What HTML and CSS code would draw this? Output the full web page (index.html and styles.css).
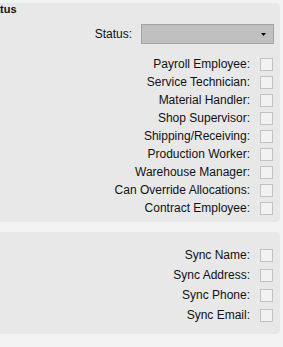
FILE: index.html
```html
<!DOCTYPE html>
<html>
<head>
<meta charset="utf-8">
<link rel="stylesheet" href="styles.css">
</head>
<body>
<div class="page">
  <section class="panel panel-status">
    <div class="panel-title">Status</div>
    <div class="field-row select-row">
      <label class="label">Status:</label>
      <div class="select"><svg class="arrow" width="5" height="3" viewBox="0 0 5 3"><polygon points="0,0 5,0 2.5,3" fill="#000"/></svg></div>
    </div>
    <div class="check-list">
      <div class="check-row"><span class="label">Payroll Employee:</span><input type="checkbox" class="box"></div>
      <div class="check-row"><span class="label">Service Technician:</span><input type="checkbox" class="box"></div>
      <div class="check-row"><span class="label">Material Handler:</span><input type="checkbox" class="box"></div>
      <div class="check-row"><span class="label">Shop Supervisor:</span><input type="checkbox" class="box"></div>
      <div class="check-row"><span class="label">Shipping/Receiving:</span><input type="checkbox" class="box"></div>
      <div class="check-row"><span class="label">Production Worker:</span><input type="checkbox" class="box"></div>
      <div class="check-row"><span class="label">Warehouse Manager:</span><input type="checkbox" class="box"></div>
      <div class="check-row"><span class="label">Can Override Allocations:</span><input type="checkbox" class="box"></div>
      <div class="check-row"><span class="label">Contract Employee:</span><input type="checkbox" class="box"></div>
    </div>
  </section>
  <section class="panel panel-sync">
    <div class="sync-list">
      <div class="sync-row"><span class="label">Sync Name:</span><input type="checkbox" class="box"></div>
      <div class="sync-row"><span class="label">Sync Address:</span><input type="checkbox" class="box"></div>
      <div class="sync-row"><span class="label">Sync Phone:</span><input type="checkbox" class="box"></div>
      <div class="sync-row"><span class="label">Sync Email:</span><input type="checkbox" class="box"></div>
    </div>
  </section>
</div>
</body>
</html>
```
FILE: styles.css
```css
html, body {
  margin: 0;
  padding: 0;
  overflow: hidden;
  background: #f3f3f4;
  font-family: "Liberation Sans", Arial, sans-serif;
  font-size: 12px;
  color: #111;
}

.page {
  width: 283px;
  height: 347px;
  overflow: hidden;
  padding-top: 3px;
  box-sizing: border-box;
}

.panel {
  background: #e8e8e8;
  border-radius: 4px;
  margin-left: -40px;
  margin-right: 3px;
  padding-right: 6px;
}

.panel-status {
  padding-bottom: 5px;
}

.panel-title {
  font-weight: bold;
  font-size: 11px;
  line-height: 12px;
  padding-left: 23px;
  height: 12px;
}

.field-row {
  display: flex;
  justify-content: flex-end;
  align-items: center;
  gap: 9px;
}

.select-row {
  margin-top: 9px;
  height: 20px;
}

.select {
  width: 133px;
  height: 20px;
  box-sizing: border-box;
  background: #c0c0c0;
  border: 1px solid #a4a4a4;
  display: flex;
  justify-content: flex-end;
  align-items: center;
  padding-right: 7px;
}

.arrow {
  display: block;
}

.check-list {
  margin-top: 11px;
  padding-right: 1px;
}

.check-row,
.sync-row {
  display: flex;
  justify-content: flex-end;
  align-items: center;
  gap: 10px;
}

.check-row {
  height: 18px;
}

.panel-sync {
  margin-top: 10px;
  padding-top: 13px;
  padding-bottom: 9px;
}

.sync-list {
  padding-right: 1px;
}

.sync-row {
  height: 20px;
}

.box {
  appearance: none;
  -webkit-appearance: none;
  margin: 0;
  width: 13px;
  height: 13px;
  box-sizing: border-box;
  border: 1px solid #c2c2c2;
  background: #f2f2f2;
}
```
